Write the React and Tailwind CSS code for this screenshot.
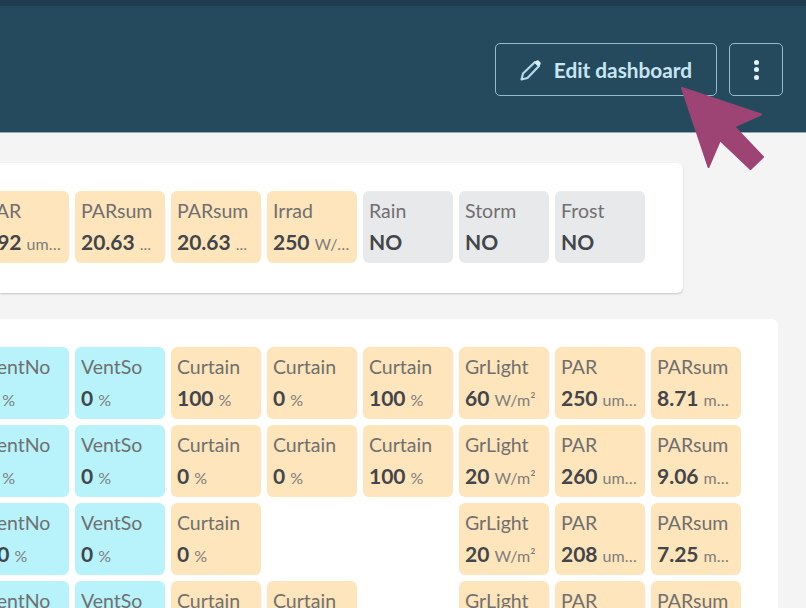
import React from 'react';

const tones = {
  orange: 'bg-[#ffe5bb]',
  cyan: 'bg-[#b8f3fb]',
  gray: 'bg-[#e8e9eb]',
};

const topRow = [
  { label: 'PAR', value: '292', unit: 'umol/m²/s', tone: 'orange' },
  { label: 'PARsum', value: '20.63', unit: '...', tone: 'orange' },
  { label: 'PARsum', value: '20.63', unit: '...', tone: 'orange' },
  { label: 'Irrad', value: '250', unit: 'W/m²/s', tone: 'orange' },
  { label: 'Rain', value: 'NO', tone: 'gray' },
  { label: 'Storm', value: 'NO', tone: 'gray' },
  { label: 'Frost', value: 'NO', tone: 'gray' },
];

const vent = (label, value) => ({ label, value, unit: '%', tone: 'cyan' });
const curtain = (value) => ({ label: 'Curtain', value, unit: '%', tone: 'orange' });
const light = (value) => ({ label: 'GrLight', value, unit: 'W/m²', tone: 'orange' });
const par = (value) => ({ label: 'PAR', value, unit: 'umol/m²/s', tone: 'orange' });
const parSum = (value) => ({ label: 'PARsum', value, unit: 'mol/m²', tone: 'orange' });

const rows = [
  [vent('VentNo', '0'), vent('VentSo', '0'), curtain('100'), curtain('0'), curtain('100'), light('60'), par('250'), parSum('8.71')],
  [vent('VentNo', '0'), vent('VentSo', '0'), curtain('0'), curtain('0'), curtain('100'), light('20'), par('260'), parSum('9.06')],
  [vent('VentNo', '20'), vent('VentSo', '0'), curtain('0'), null, null, light('20'), par('208'), parSum('7.25')],
  [vent('VentNo', '0'), vent('VentSo', '0'), curtain('0'), curtain('0'), null, light('20'), par('208'), parSum('7.25')],
];

const Tile = ({ item }) => {
  if (!item) return <div />;
  return (
    <div className={`h-[72px] w-[90px] rounded-[6px] pl-[6px] pr-[7px] pt-[6px] ${tones[item.tone]}`}>
      <div className="truncate text-[19.5px] leading-[28px] text-[#707070]">{item.label}</div>
      <div className="mt-[3px] flex items-baseline whitespace-nowrap leading-[28px]">
        <span className="shrink-0 text-[21px] font-bold text-[#42464a]">{item.value}</span>
        {item.unit && <span className="ml-[5px] min-w-0 truncate text-[16px] text-[#7d7d7d]">{item.unit}</span>}
      </div>
    </div>
  );
};

const App = () => {
  return (
    <div className="relative h-[608px] w-[806px] overflow-hidden bg-[#f4f4f4] font-['Lato',sans-serif]">
      {/* Header */}
      <div className="h-[6px] bg-[#1f3d4e]" />
      <div className="flex h-[127px] items-start justify-end gap-[12px] border-b border-[#8fa9b6] bg-[#264a5d] pr-[23px] pt-[37px]">
        <button className="flex h-[53px] w-[222px] items-center justify-center gap-[12px] rounded-[5px] border border-[#8fbccf] text-[20.8px] font-bold text-[#c6e6f3]">
          <svg width="22" height="22" viewBox="0 0 22 22" fill="none">
            <path d="M1.5 20.5 L3 14.5 L15 3 L19 7 L7.5 19 Z" stroke="#b4dcee" strokeWidth="2.1" strokeLinejoin="round" />
            <path d="M14.5 3.5 L16 2 Q17 1 18.5 1.5 L20.5 3.5 Q21.2 5 20 6 L18.5 7.5 Z" fill="#d8eef7" />
          </svg>
          <span>Edit dashboard</span>
        </button>
        <button className="flex h-[53px] w-[54px] flex-col items-center justify-center gap-[2.5px] rounded-[5px] border border-[#8fbccf]">
          <span className="h-[5px] w-[5px] rounded-full bg-[#e4f3f9]" />
          <span className="h-[5px] w-[5px] rounded-full bg-[#e4f3f9]" />
          <span className="h-[5px] w-[5px] rounded-full bg-[#e4f3f9]" />
        </button>
      </div>

      {/* Summary card */}
      <div className="mt-[30px] h-[130px] w-[683px] overflow-hidden rounded-r-[6px] bg-white pt-[28px] shadow-[0_1px_2px_rgba(0,0,0,0.2)]">
        <div className="-ml-[21px] flex gap-[6px]">
          {topRow.map((item, i) => (
            <Tile key={i} item={item} />
          ))}
        </div>
      </div>

      {/* Detail card */}
      <div className="mt-[26px] w-[778px] overflow-hidden rounded-r-[6px] bg-white pb-[28px] pt-[28px]">
        <div className="-ml-[21px] grid w-[762px] grid-cols-[repeat(8,90px)] gap-[6px]">
          {rows.flat().map((item, i) => (
            <Tile key={i} item={item} />
          ))}
        </div>
      </div>

      {/* Pointer arrow */}
      <svg className="absolute left-[670px] top-[78px]" width="104" height="100" viewBox="670 78 104 100">
        <path
          d="M682 88 L761 114.5 L734 126.5 L763 157 L750.5 169 L720 140 L708.5 167 Z"
          fill="#9d4474"
          stroke="#9d4474"
          strokeWidth="2"
          strokeLinejoin="round"
        />
      </svg>
    </div>
  );
};

export default App;
